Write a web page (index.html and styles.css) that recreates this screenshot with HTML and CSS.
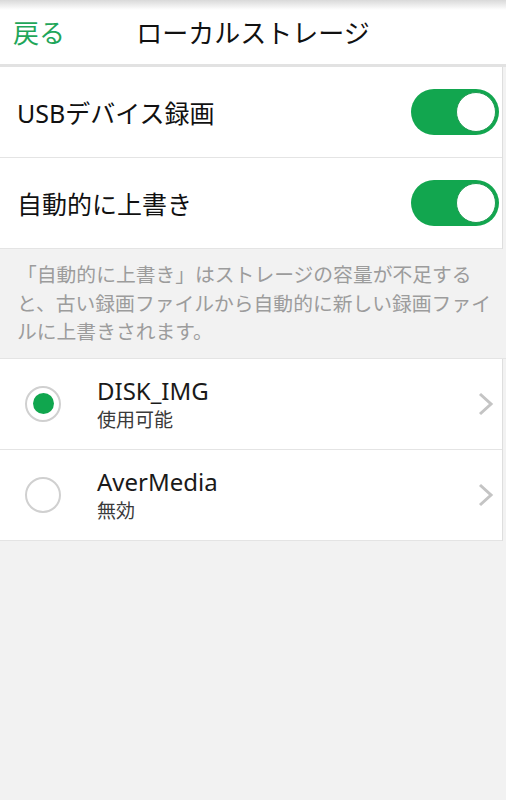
FILE: index.html
```html
<!DOCTYPE html>
<html lang="ja">
<head>
    <meta charset="UTF-8">
    <meta name="viewport" content="width=device-width, initial-scale=1.0">
    <title>ローカルストレージ</title>
    <link rel="stylesheet" href="styles.css">
</head>
<body>

<header class="topbar">
    <a class="back" href="#">戻る</a>
    <h1 class="title">ローカルストレージ</h1>
    <span></span>
</header>

<section class="group">
    <div class="row">
        <span class="label">USBデバイス録画</span>
        <span class="toggle on"><span class="knob"></span></span>
    </div>
    <div class="row">
        <span class="label">自動的に上書き</span>
        <span class="toggle on"><span class="knob"></span></span>
    </div>
</section>

<p class="note">「自動的に上書き」はストレージの容量が不足すると、古い録画ファイルから自動的に新しい録画ファイルに上書きされます。</p>

<section class="group">
    <div class="row device">
        <span class="radio checked"></span>
        <div class="info">
            <div class="name">DISK_IMG</div>
            <div class="status">使用可能</div>
        </div>
        <svg class="chevron" width="16" height="24" viewBox="0 0 16 24">
            <path d="M2 2 L13 12 L2 22" fill="none" stroke="#c4c4c4" stroke-width="3"/>
        </svg>
    </div>
    <div class="row device">
        <span class="radio"></span>
        <div class="info">
            <div class="name">AverMedia</div>
            <div class="status">無効</div>
        </div>
        <svg class="chevron" width="16" height="24" viewBox="0 0 16 24">
            <path d="M2 2 L13 12 L2 22" fill="none" stroke="#c4c4c4" stroke-width="3"/>
        </svg>
    </div>
</section>

</body>
</html>
```

FILE: styles.css
```css
body {
    margin: 0;
    padding: 0;
    background-color: #f2f2f2;
    font-family: "Noto Sans", "Noto Sans CJK JP", sans-serif;
    color: #1a1a1a;
}

.topbar {
    display: grid;
    grid-template-columns: 1fr auto 1fr;
    align-items: center;
    height: 64px;
    background: linear-gradient(#d9d9d9, #ffffff 10px);
    border-bottom: 3px solid #e2e2e2;
}

.back {
    padding-left: 13px;
    font-size: 26px;
    color: #1fa65a;
    text-decoration: none;
}

.title {
    margin: 0;
    font-size: 26px;
    font-weight: normal;
    color: #111;
}

.group {
    width: 502px;
    background-color: #fff;
    border-right: 1px solid #dedede;
}

.row {
    display: flex;
    align-items: center;
    height: 90px;
    border-bottom: 1px solid #e4e4e4;
}

.label {
    flex: 1;
    padding-left: 17px;
    font-size: 25px;
    color: #111;
}

.toggle {
    position: relative;
    width: 88px;
    height: 46px;
    margin-right: 3px;
    border-radius: 23px;
    background-color: #12a64f;
}

.toggle .knob {
    position: absolute;
    top: 3px;
    right: 3px;
    width: 38px;
    height: 38px;
    border-radius: 50%;
    border: 1px solid #1d9a50;
    background-color: #fff;
}

.note {
    margin: 0;
    padding: 12px 9px 11px 17px;
    width: 480px;
    font-size: 19.8px;
    line-height: 28.5px;
    color: #9c9c9c;
    text-spacing-trim: space-all;
    border-bottom: 1px solid #e4e4e4;
}

.radio {
    box-sizing: border-box;
    width: 36px;
    height: 36px;
    margin-left: 25px;
    margin-right: 36px;
    border: 2px solid #d0d0d0;
    border-radius: 50%;
    display: flex;
    align-items: center;
    justify-content: center;
}

.radio.checked::after {
    content: "";
    width: 21px;
    height: 21px;
    border-radius: 50%;
    background-color: #10a64e;
}

.info {
    flex: 1;
    margin-top: 1px;
}

.name {
    font-size: 24px;
    line-height: 32px;
    color: #1a1a1a;
}

.status {
    font-size: 19px;
    line-height: 26px;
    color: #3a3a3a;
}

.chevron {
    margin-right: 8px;
}
```
